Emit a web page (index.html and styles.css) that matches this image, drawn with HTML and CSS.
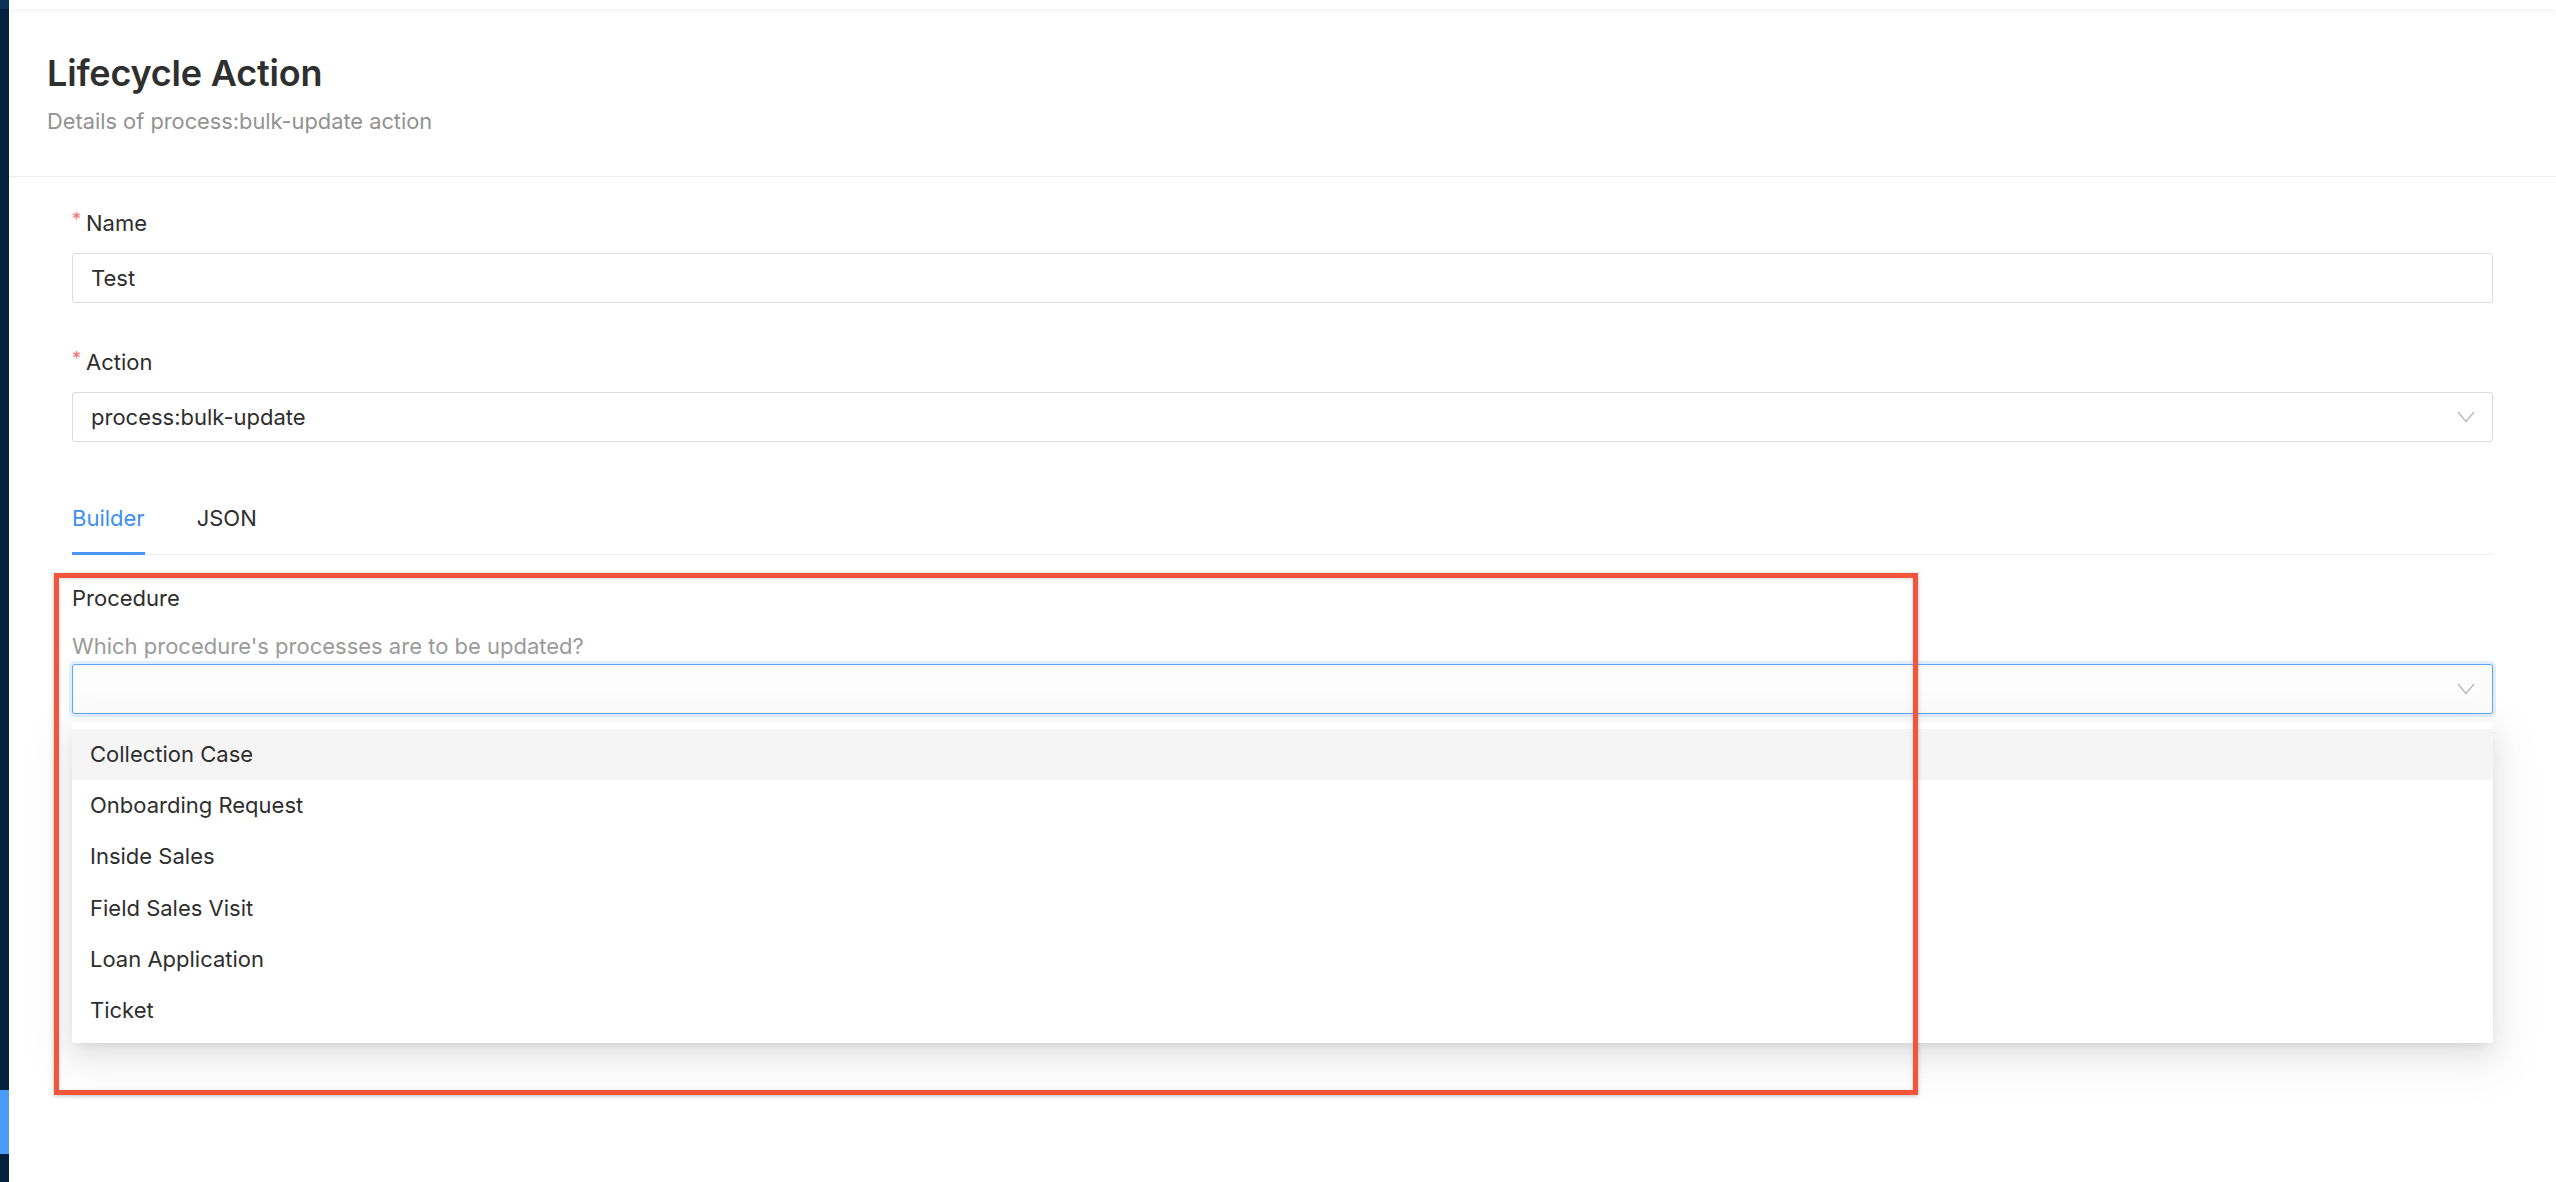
FILE: index.html
```html
<!DOCTYPE html>
<html lang="en">
<head>
<meta charset="utf-8">
<title>Lifecycle Action</title>
<link rel="stylesheet" href="styles.css">
</head>
<body>
<div class="app">
  <aside class="sidebar">
    <div class="sb-top"></div>
    <div class="sb-active"></div>
  </aside>
  <main class="main">
    <div class="topstrip"></div>
    <header class="page-header">
      <h1 class="title">Lifecycle Action</h1>
      <p class="subtitle">Details of process:bulk-update action</p>
    </header>
    <section class="form">
      <div class="form-item">
        <label class="label"><span class="req">*</span>Name</label>
        <div class="input"><span class="value">Test</span></div>
      </div>
      <div class="form-item before-tabs">
        <label class="label"><span class="req">*</span>Action</label>
        <div class="input select">
          <span class="value">process:bulk-update</span>
          <svg class="chev" viewBox="0 0 18 12" width="18" height="12"><polyline points="1,1 9,10.5 17,1" fill="none" stroke="#bfbfbf" stroke-width="1.6"/></svg>
        </div>
      </div>
      <nav class="tabs">
        <div class="tab active">Builder</div>
        <div class="tab">JSON</div>
      </nav>
      <div class="builder">
        <div class="label plain">Procedure</div>
        <div class="help">Which procedure's processes are to be updated?</div>
        <div class="select-wrap">
          <div class="input select focused">
            <span class="value"></span>
            <svg class="chev" viewBox="0 0 18 12" width="18" height="12"><polyline points="1,1 9,10.5 17,1" fill="none" stroke="#bfbfbf" stroke-width="1.6"/></svg>
          </div>
          <ul class="dropdown">
            <li class="opt hover">Collection Case</li>
            <li class="opt">Onboarding Request</li>
            <li class="opt">Inside Sales</li>
            <li class="opt">Field Sales Visit</li>
            <li class="opt">Loan Application</li>
            <li class="opt">Ticket</li>
          </ul>
        </div>
      </div>
    </section>
    <div class="annotation"></div>
  </main>
</div>
</body>
</html>
```

FILE: styles.css
```css
* { box-sizing: border-box; }
html, body {
  margin: 0;
  padding: 0;
  background: #fff;
}
body {
  font-family: Inter, "Noto Sans", "Liberation Sans", sans-serif;
  color: #2b2b2b;
  width: 2556px;
  height: 1182px;
  overflow: hidden;
}
.app {
  display: flex;
  height: 1182px;
}
.sidebar {
  width: 9px;
  flex: none;
  background: #03203d;
  display: flex;
  flex-direction: column;
}
.sb-top {
  height: 9px;
  background: #0b3355;
}
.sb-active {
  margin-top: 1081px;
  height: 64px;
  background: #4b9bfa;
}
.main {
  flex: 1;
  position: relative;
}
.topstrip {
  height: 9px;
  background: #fff;
  position: relative;
  z-index: 1;
  box-shadow: 0 2px 7px rgba(0, 0, 0, 0.06);
}
.page-header {
  padding: 38px 38px 0;
  height: 168px;
  border-bottom: 1px solid #ececec;
}
.title {
  margin: 0;
  font-size: 36px;
  line-height: 52px;
  font-weight: 600;
  color: #2f2f2f;
  letter-spacing: -0.2px;
}
.subtitle {
  margin: 5px 0 0;
  font-size: 21.8px;
  line-height: 34px;
  color: #929292;
}
.form {
  padding: 28px 63px 0;
}
.form-item {
  margin-bottom: 41px;
}
.form-item.before-tabs {
  margin-bottom: 38px;
}
.label {
  display: block;
  font-size: 22px;
  line-height: 36px;
  height: 36px;
  margin-bottom: 12px;
  color: #2e2e2e;
}
.req {
  color: #ff6b6b;
  font-size: 18px;
  display: inline-block;
  width: 14px;
  vertical-align: top;
  line-height: 30px;
}
.input {
  height: 50px;
  border: 1px solid #dcdcdc;
  border-radius: 3px;
  padding: 0 18px;
  display: flex;
  align-items: center;
  font-size: 22px;
  color: #2e2e2e;
  background: #fff;
}
.select {
  justify-content: space-between;
}
.chev {
  display: block;
  margin-right: -1px;
}
.tabs {
  display: flex;
  gap: 52px;
  border-bottom: 1px solid #efefef;
}
.tab {
  font-size: 22px;
  line-height: 36px;
  padding: 20px 0 16px;
  border-bottom: 3px solid transparent;
  margin-bottom: -1px;
  color: #2e2e2e;
}
.tab.active {
  color: #3d8ff5;
  border-bottom-color: #4a97f7;
}
.builder {
  padding-top: 25px;
}
.label.plain {
  margin-bottom: 0;
}
.help {
  margin-top: 13px;
  font-size: 22px;
  line-height: 34px;
  color: #9a9a9a;
}
.select-wrap {
  position: relative;
  margin-top: 1px;
}
.input.focused {
  border-color: #5aa6f8;
  box-shadow: 0 0 0 3px rgba(64, 150, 255, 0.16);
  background: #fcfcfc;
}
.dropdown {
  position: absolute;
  left: 0;
  right: 0;
  top: calc(100% + 8px);
  margin: 0;
  padding: 7px 0 7px;
  list-style: none;
  background: #fff;
  border-radius: 3px;
  box-shadow: 0 5px 10px -6px rgba(0, 0, 0, 0.12), 0 10px 26px rgba(0, 0, 0, 0.08), 0 15px 46px 13px rgba(0, 0, 0, 0.05);
  z-index: 2;
}
.opt {
  height: 51.2px;
  line-height: 51px;
  padding: 0 18px;
  font-size: 22px;
  color: #2e2e2e;
}
.opt.hover {
  background: #f5f5f5;
}
.annotation {
  position: absolute;
  left: 45px;
  top: 573px;
  width: 1864px;
  height: 522px;
  border: 5px solid #f2553a;
  box-shadow: 0 1px 4px rgba(0, 0, 0, 0.25), inset 0 1px 4px rgba(0, 0, 0, 0.15);
  z-index: 3;
  pointer-events: none;
}
```
